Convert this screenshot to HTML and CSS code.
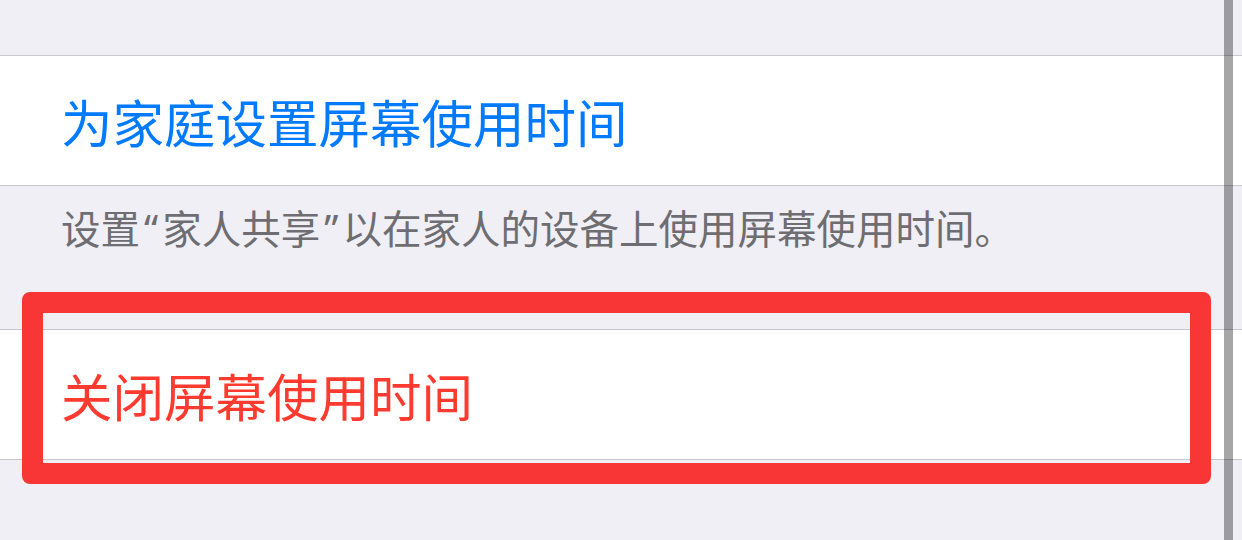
FILE: index.html
```html
<!DOCTYPE html>
<html lang="zh-CN">
<head>
    <meta charset="UTF-8">
    <meta name="viewport" content="width=device-width, initial-scale=1.0">
    <title>屏幕使用时间</title>
    <link rel="stylesheet" href="styles.css">
</head>
<body>

<div class="settings">
    <div class="group-gap"></div>

    <div class="cell">
        <span class="cell-link">为家庭设置屏幕使用时间</span>
    </div>
    <div class="group-footer">设置<span class="quote">“</span>家人共享<span class="quote">”</span>以在家人的设备上使用屏幕使用时间。</div>

    <div class="cell">
        <span class="cell-danger">关闭屏幕使用时间</span>
    </div>
    <div class="page-bottom"></div>
</div>

<!-- 标注框 -->
<div class="highlight-box"></div>

<div class="scrollbar"></div>

</body>
</html>
```

FILE: styles.css
```css
body {
    margin: 0;
    padding: 0;
    background-color: #f0eff5;
    font-family: "Noto Sans CJK SC", "Noto Sans", sans-serif;
}

.group-gap {
    height: 55px;
}

.cell {
    display: flex;
    align-items: center;
    height: 129px;
    padding-left: 61px;
    background-color: white;
    border-top: 1px solid #c8c7cc;
    border-bottom: 1px solid #c8c7cc;
    font-size: 51.5px;
}

.cell-link {
    color: #007aff;
}

.cell-danger {
    color: #ff3b30;
}

.group-footer {
    box-sizing: border-box;
    height: 143px;
    padding: 19px 61px 0;
    font-size: 39.5px;
    line-height: 44px;
    color: #6d6d72;
}

.group-footer .quote {
    font-family: "Noto Sans", sans-serif;
    margin: 0 4px;
}

.page-bottom {
    height: 80px;
}

.highlight-box {
    position: absolute;
    left: 22px;
    top: 292px;
    width: 1189px;
    height: 192px;
    box-sizing: border-box;
    border: 21px solid #f93636;
    border-radius: 8px;
}

.scrollbar {
    position: fixed;
    top: 0;
    bottom: 0;
    left: 1224px;
    width: 9px;
    background-color: rgba(0, 0, 0, 0.35);
}
```
